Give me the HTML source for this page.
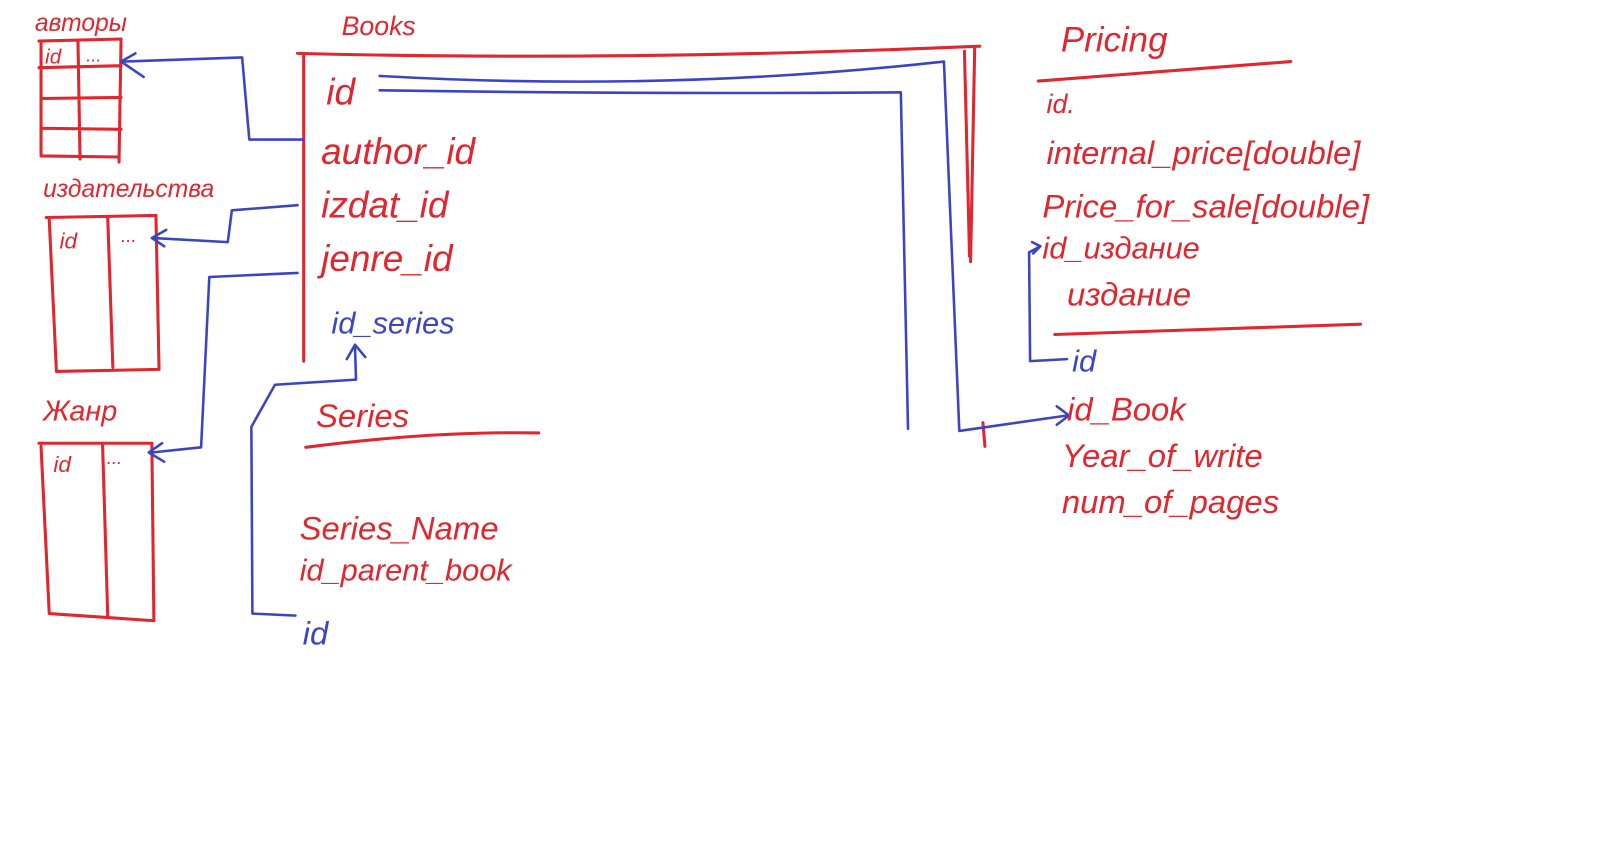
<!DOCTYPE html>
<html><head><meta charset="utf-8"><style>
html,body{margin:0;padding:0;background:#fff;width:1601px;height:846px;overflow:hidden}
svg{display:block}
text{font-family:"Liberation Sans","DejaVu Sans",sans-serif;font-style:italic}
.r{fill:#e0262e}
.b{fill:#3b45c4}
</style></head><body>
<svg width="1601" height="846" viewBox="0 0 1601 846" xmlns="http://www.w3.org/2000/svg">
<g transform="scale(1.026)">
<g fill="none" stroke="#e0262e" stroke-width="3" stroke-linecap="round" stroke-linejoin="round">
<path d="M38 40 L118 38 L116 158 M40 40 L40 150 M38 66 L118 64 M40 96 L118 95 M40 125 L118 126 M40 152 L116 153 M76 40 L78 155"/>
<path d="M45 212 L152 210 L155 360 L55 362 L48 214 M105 212 L110 358"/>
<path d="M38 432 L148 432 L150 605 L48 598 L40 435 M100 434 L105 600"/>
<path d="M290 52 Q600 60 955 45 M296 52 L296 352 M950 46 L946 255 M940 50 L945 250"/>
<path d="M298 436 Q420 420 525 422"/>
<path d="M1012 79 L1258 60 M1028 326 L1326 316 M958 412 L960 435"/>
</g>
<g fill="none" stroke="#3b45c4" stroke-width="2.5" stroke-linecap="round" stroke-linejoin="round">
<path d="M296 136 L243 136 L236 56 L120 60 M132 52 L118 60 L140 75"/>
<path d="M290 200 L226 205 L222 236 L150 232 M162 224 L148 232 L160 240"/>
<path d="M290 266 L204 270 L196 436 L148 441 M158 432 L145 441 L160 450"/>
<path d="M288 600 L246 598 L245 416 L268 375 L347 370 L346 338 M338 350 L346 336 L356 348"/>
<path d="M370 74 Q650 90 920 60 L935 420 L1040 405 M1030 396 L1042 405 L1030 414"/>
<path d="M370 88 Q630 92 878 90 L885 418"/>
<path d="M1040 350 L1004 352 L1003 246 L1014 240 M1006 236 L1014 240 L1007 247"/>
</g>
<g font-size="24">
<text x="34" y="30" class="r">авторы</text>
<text x="44" y="62" class="r" font-size="20">id</text><text x="84" y="60" class="r" font-size="18">...</text>
<text x="42" y="192" class="r">издательства</text>
<text x="58" y="242" class="r" font-size="22">id</text><text x="118" y="236" class="r" font-size="18">...</text>
<text x="42" y="410" class="r" font-size="28">Жанр</text>
<text x="52" y="460" class="r" font-size="22">id</text><text x="104" y="452" class="r" font-size="18">...</text>
<text x="333" y="34" class="r" font-size="26">Books</text>
<text x="318" y="102" class="r" font-size="36">id</text>
<text x="313" y="160" class="r" font-size="36">author_id</text>
<text x="313" y="212" class="r" font-size="36">izdat_id</text>
<text x="313" y="264" class="r" font-size="36">jenre_id</text>
<text x="323" y="325" class="b" font-size="30">id_series</text>
<text x="308" y="416" class="r" font-size="32">Series</text>
<text x="292" y="526" class="r" font-size="32">Series_Name</text>
<text x="292" y="566" class="r" font-size="30">id_parent_book</text>
<text x="295" y="628" class="b" font-size="32">id</text>
<text x="1034" y="50" class="r" font-size="34">Pricing</text>
<text x="1020" y="110" class="r" font-size="26">id.</text>
<text x="1020" y="160" class="r" font-size="32">internal_price[double]</text>
<text x="1016" y="212" class="r" font-size="32">Price_for_sale[double]</text>
<text x="1016" y="252" class="r" font-size="30">id_издание</text>
<text x="1040" y="298" class="r" font-size="32">издание</text>
<text x="1045" y="362" class="b" font-size="30">id</text>
<text x="1040" y="410" class="r" font-size="32">id_Book</text>
<text x="1035" y="455" class="r" font-size="32">Year_of_write</text>
<text x="1035" y="500" class="r" font-size="32">num_of_pages</text>
</g>
</g>
</svg>
</body></html>
